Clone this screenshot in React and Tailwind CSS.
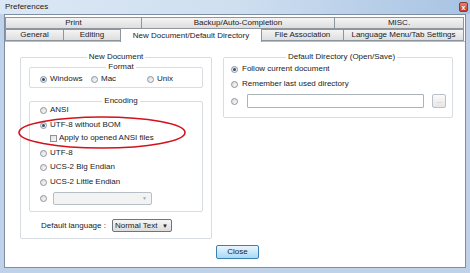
import React from "react";

function Radio({ checked }) {
  return (
    <span className="inline-flex h-[7px] w-[7px] shrink-0 items-center justify-center rounded-full border border-[#8c939b] bg-gradient-to-br from-[#dcdcdc] to-[#fbfbfb]">
      {checked && <span className="h-[3px] w-[3px] rounded-full bg-[#2f4f72]" />}
    </span>
  );
}

function Option({ checked, label, className = "" }) {
  return (
    <div className={"flex h-[10px] items-center gap-[3px] " + className}>
      <Radio checked={checked} />
      <span className="leading-none">{label}</span>
    </div>
  );
}

function Tab({ label, width, first }) {
  return (
    <div
      className={
        "flex h-[12px] items-center justify-center border border-[#8d969f] bg-gradient-to-b from-[#f4f4f4] to-[#dedede] leading-none " +
        (first ? "" : "-ml-px")
      }
      style={{ width }}
    >
      {label}
    </div>
  );
}

export default function App() {
  return (
    <div className="relative flex h-[273px] w-[470px] flex-col bg-[#bfd2ea] font-['Liberation_Sans',Arial,sans-serif] text-[8px] text-[#1b1b1b]">
      {/* title bar */}
      <div className="flex h-[14px] items-center justify-between bg-gradient-to-r from-[#dbe7f4] via-[#cfdff0] to-[#a8c3e3] pl-[5px] pr-[2px]">
        <span className="text-[8px] leading-none">Preferences</span>
        <div className="flex h-[10px] w-[9px] items-center justify-center rounded-[2px] border border-[#8a3a33] bg-gradient-to-b from-[#e8806f] to-[#c2382b] text-[7px] font-bold leading-none text-white">
          x
        </div>
      </div>

      {/* client area */}
      <div className="mx-[4px] mb-[5px] flex flex-1 flex-col border border-[#7d8ea4] bg-white pt-[2px]">
        {/* tabs, back row */}
        <div className="flex">
          <Tab label="Print" width={137} first />
          <Tab label="Backup/Auto-Completion" width={194} />
          <Tab label="MISC." width={130} />
        </div>
        {/* tabs, front row */}
        <div className="-mt-px flex items-end">
          <Tab label="General" width={59} first />
          <Tab label="Editing" width={58} />
          <div className="relative z-10 -mb-px -ml-px flex h-[14px] w-[142px] items-center justify-center border border-b-0 border-[#8d969f] bg-white pt-[1px] leading-none">
            New Document/Default Directory
          </div>
          <Tab label="File Association" width={83} />
          <Tab label="Language Menu/Tab Settings" width={121} />
        </div>

        {/* tab page */}
        <div className="flex flex-1 flex-col border-t border-[#b5bcc4]">
          <div className="flex gap-[11px] pl-[15px] pt-[10px]">
            {/* New Document */}
            <fieldset className="w-[192px] rounded-[2px] border border-[#d7dde3] pb-[6px]">
              <legend className="mx-auto px-[2px] leading-[10px]">New Document</legend>

              <fieldset className="mx-[8px] rounded-[2px] border border-[#d7dde3] pb-[3px] pl-[10px] pt-[2px]">
                <legend className="mx-auto px-[2px] leading-[10px]">Format</legend>
                <div className="flex">
                  <Option checked label="Windows" className="w-[51px]" />
                  <Option label="Mac" className="w-[56px]" />
                  <Option label="Unix" />
                </div>
              </fieldset>

              <fieldset className="mx-[8px] mt-[9px] flex flex-col rounded-[2px] border border-[#d7dde3] pb-[6px] pl-[10px]">
                <legend className="mx-auto px-[2px] leading-[8px]">Encoding</legend>
                <Option label="ANSI" />
                <Option checked label="UTF-8 without BOM" className="mt-[5px]" />
                <div className="mt-[3px] flex h-[10px] items-center gap-[2px] pl-[10px]">
                  <span className="h-[7px] w-[7px] border border-[#8c939b] bg-gradient-to-br from-[#e2e2e2] to-[#fafafa]" />
                  <span className="leading-none">Apply to opened ANSI files</span>
                </div>
                <Option label="UTF-8" className="mt-[5px]" />
                <Option label="UCS-2 Big Endian" className="mt-[4px]" />
                <Option label="UCS-2 Little Endian" className="mt-[5px]" />
                <div className="mt-[5px] flex items-center gap-[6px]">
                  <Radio />
                  <div className="flex h-[13px] w-[99px] items-center justify-end rounded-[2px] border border-[#b7bec6] bg-[#f3f3f3] pr-[4px]">
                    <span className="text-[5px] leading-none text-[#a4a9ae]">▼</span>
                  </div>
                </div>
              </fieldset>

              <div className="mt-[7px] flex items-center gap-[6px] pl-[20px]">
                <span className="leading-none">Default language :</span>
                <div className="flex h-[13px] w-[60px] items-center justify-between rounded-[2px] border border-[#6f757b] bg-gradient-to-b from-[#f6f6f6] to-[#dcdcdc] pl-[2px] pr-[3px]">
                  <span className="leading-none">Normal Text</span>
                  <span className="text-[6px] leading-none text-[#222]">▼</span>
                </div>
              </div>
            </fieldset>

            {/* Default Directory */}
            <fieldset className="h-fit w-[230px] rounded-[2px] border border-[#d7dde3] pb-[9px] pl-[7px] pt-[2px]">
              <legend className="mx-auto px-[2px] leading-[10px]">Default Directory (Open/Save)</legend>
              <Option checked label="Follow current document" className="gap-[4px]" />
              <Option label="Remember last used directory" className="mt-[5px] gap-[4px]" />
              <div className="mt-[5px] flex items-center">
                <Radio />
                <div className="ml-[9px] h-[14px] w-[177px] rounded-[1px] border border-[#aab2ba] bg-white" />
                <div className="ml-[8px] flex h-[14px] w-[14px] items-end justify-center rounded-[2px] border border-[#b9c0c7] bg-gradient-to-b from-[#fafafa] to-[#e6e6e6] pb-[3px] text-[6px] leading-none text-[#9aa0a6]">
                  ...
                </div>
              </div>
            </fieldset>
          </div>

          <div className="mt-[6px] flex justify-center pl-[5px]">
            <div className="flex h-[14px] w-[43px] items-center justify-center rounded-[2px] border border-[#3c7fb1] bg-gradient-to-b from-[#eaf6fd] to-[#a7d9f5] leading-none">
              Close
            </div>
          </div>
        </div>
      </div>

      {/* red annotation ellipse */}
      <svg className="absolute left-[17px] top-[115px]" width="170" height="35" viewBox="0 0 170 35">
        <ellipse cx="85" cy="17.5" rx="83" ry="15.5" fill="none" stroke="#d4121c" strokeWidth="1.6" />
      </svg>
    </div>
  );
}
